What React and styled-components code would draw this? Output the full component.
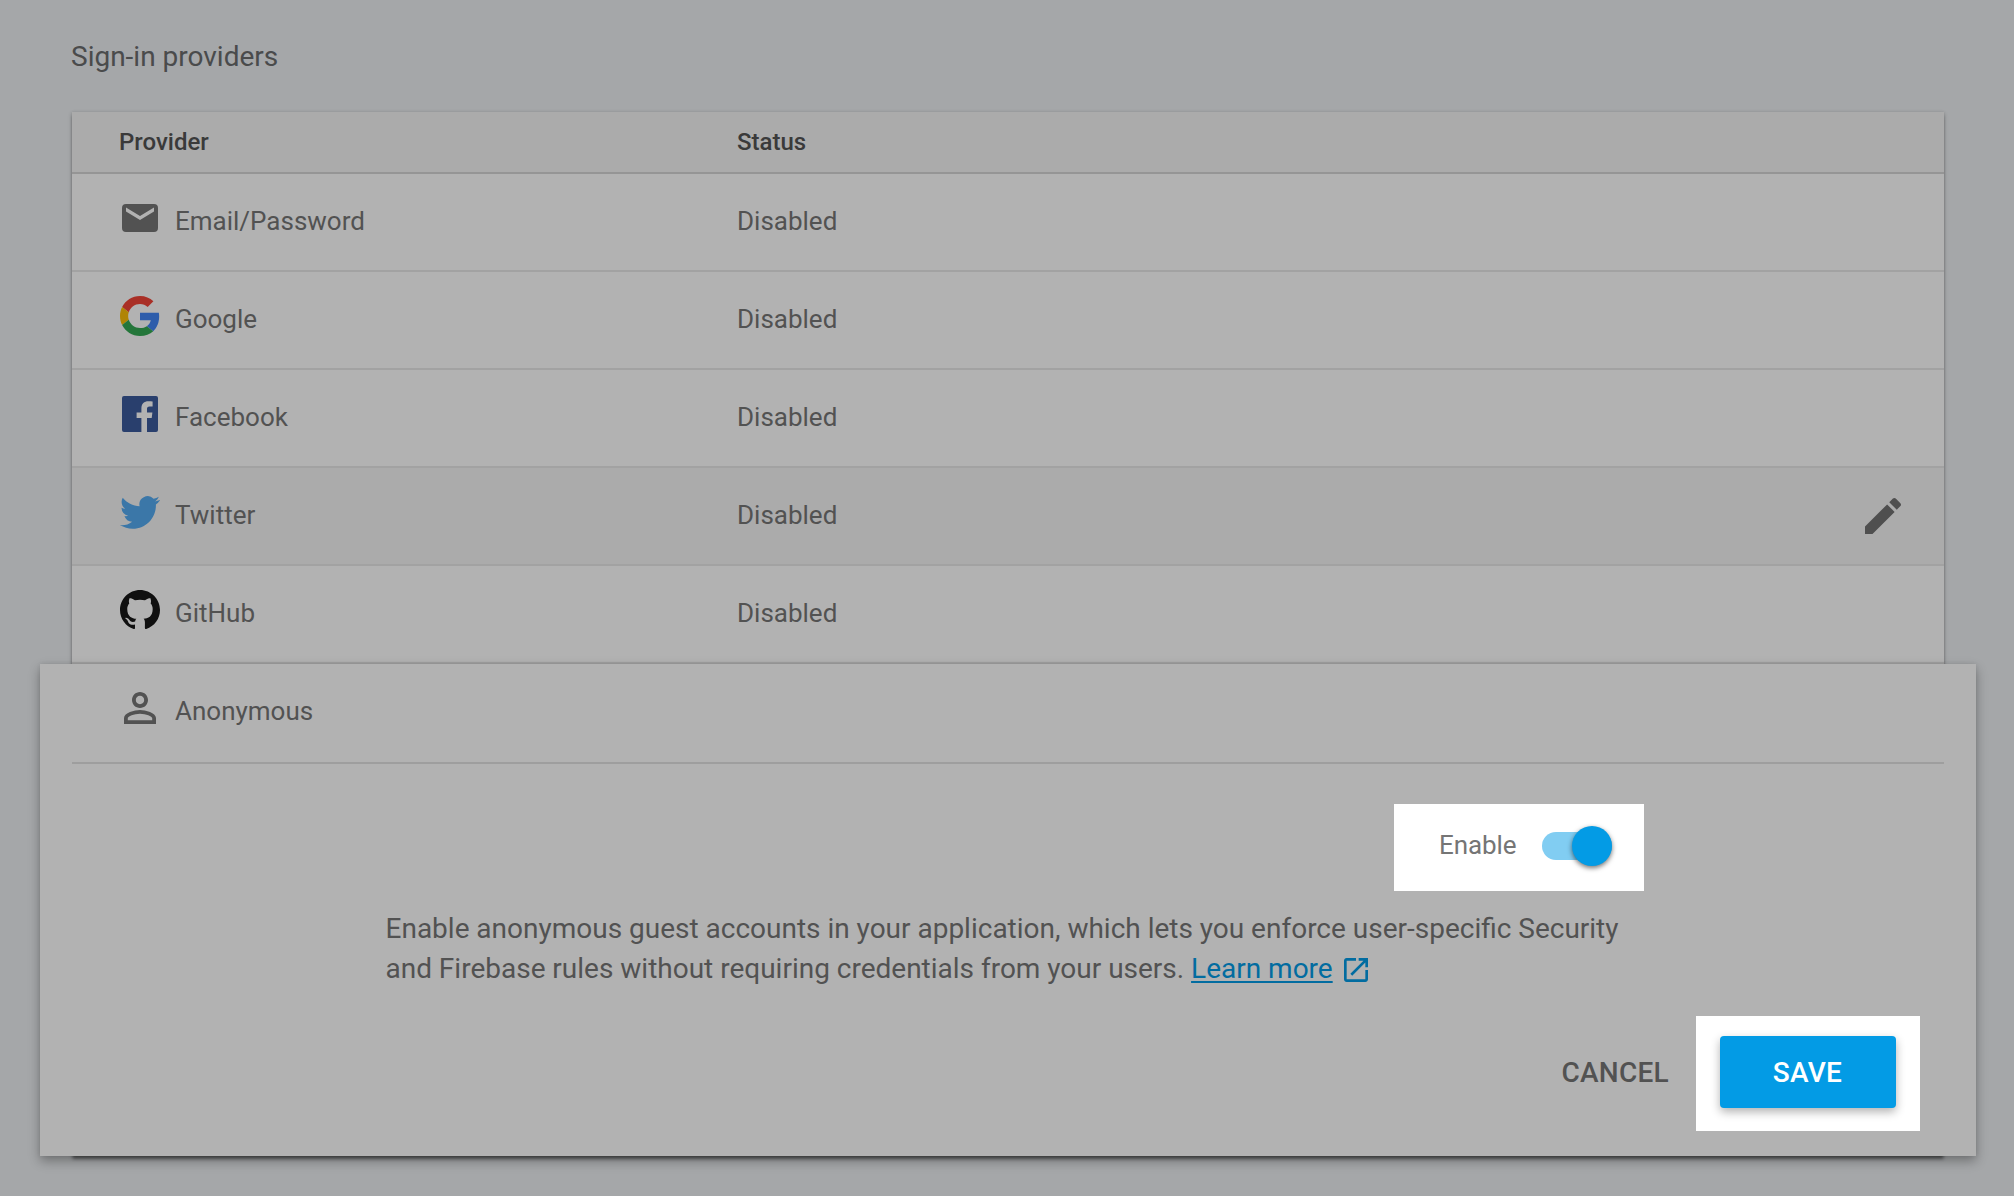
import React from "react";
import styled, { createGlobalStyle } from "styled-components";

const GlobalStyle = createGlobalStyle`
  * { box-sizing: border-box; }
  html, body { margin: 0; padding: 0; }
  body {
    background: #a5a7a9;
    font-family: Roboto, "Liberation Sans", sans-serif;
    -webkit-font-smoothing: antialiased;
  }
`;

const Page = styled.main`
  min-height: 1196px;
  padding: 37px 70px 40px 72px;
  overflow: hidden;
`;

const Title = styled.h1`
  margin: 0 0 35px -1px;
  height: 40px;
  font-size: 28px;
  line-height: 40px;
  font-weight: 400;
  color: #4a4b4c;
`;

const Card = styled.section`
  width: 1872px;
  height: 1044px;
  background: #b2b2b2;
  box-shadow:
    0 2px 4px rgba(0, 0, 0, 0.26),
    0 0 3px rgba(0, 0, 0, 0.1),
    0 4px 3px -1px rgba(0, 0, 0, 0.3);
`;

const HeaderRow = styled.div`
  display: grid;
  grid-template-columns: 618px 1fr;
  align-items: center;
  height: 62px;
  padding-left: 47px;
  background: #ababab;
  border-bottom: 2px solid #959595;
  font-size: 24px;
  font-weight: 500;
  color: #3a3a3a;
`;

const Row = styled.div`
  display: grid;
  grid-template-columns: 617px 1fr auto;
  align-items: center;
  height: 98px;
  padding: 0 37px 0 48px;
  background: ${(p) => (p.$hovered ? "#ababab" : "#b2b2b2")};
  border-bottom: 2px solid #a2a2a2;
  font-size: 26px;
  color: #525252;
`;

const Provider = styled.div`
  display: flex;
  align-items: center;
  gap: 15px;
`;

const IconSlot = styled.span`
  display: flex;
  align-items: center;
  justify-content: center;
  width: 40px;
  height: 40px;
  margin-bottom: 8px;
  svg { flex: none; display: block; }
`;

const Label = styled.span`
  line-height: 30px;
  margin-top: -2px;
`;

const EditButton = styled.button`
  display: flex;
  padding: 0;
  border: 0;
  background: none;
  color: #4f4f4f;
`;

const Panel = styled.div`
  position: relative;
  height: 492px;
  margin: 0 -32px;
  padding: 0 32px;
  background: #b2b2b2;
  box-shadow: 0 5px 11px rgba(0, 0, 0, 0.32), 0 0 4px rgba(0, 0, 0, 0.08);
`;

const PanelHead = styled.div`
  display: flex;
  height: 100px;
  padding: 0 0 2px 48px;
  border-bottom: 2px solid #9e9e9e;
  font-size: 26px;
  color: #525252;
`;

const Spotlight = styled.div`
  display: flex;
  align-items: center;
  background: #fff;
`;

const EnableBox = styled(Spotlight)`
  width: 250px;
  height: 87px;
  margin: 40px 300px 0 auto;
  padding: 0 32px 3px 45px;
  justify-content: space-between;
  font-size: 26px;
  color: #757575;
`;

const EnableLabel = styled.span`
  margin-bottom: 2px;
  letter-spacing: -0.1px;
`;

const Toggle = styled.span`
  display: flex;
  align-items: center;
  justify-content: flex-end;
  width: 70px;
  height: 28px;
  border-radius: 14px;
  background: #81cdf2;
`;

const Thumb = styled.span`
  width: 40px;
  height: 40px;
  border-radius: 50%;
  background: #039be5;
  box-shadow: 0 2px 5px rgba(0, 0, 0, 0.55);
`;

const Description = styled.p`
  margin: 18px 0 0 313.5px;
  font-size: 28px;
  line-height: 40px;
  word-spacing: -0.06px;
  color: #525252;
  white-space: nowrap;
`;

const Link = styled.a`
  color: #026ca0;
  text-decoration: underline;
  text-decoration-thickness: 2px;
  text-underline-offset: 3px;
  text-decoration-skip-ink: none;
`;

const LinkIcon = styled.svg`
  margin-left: 7px;
  vertical-align: -8px;
  fill: #026ca0;
`;

const Actions = styled.div`
  display: flex;
  align-items: flex-start;
  justify-content: flex-end;
  gap: 27px;
  height: 115px;
  margin: 27px 24px 0 0;
`;

const Button = styled.button`
  height: 72px;
  padding: 1px 0 0;
  border: 0;
  border-radius: 4px;
  font: 500 28px/71px Roboto, "Liberation Sans", sans-serif;
  letter-spacing: 0.28px;
  text-transform: uppercase;
  background: none;
  color: #525252;
`;

const CancelButton = styled(Button)`
  margin-top: 20px;
`;

const SaveButton = styled(Button)`
  width: 176px;
  padding-right: 1px;
  background: #039be5;
  color: #fff;
  box-shadow: 0 4px 10px rgba(0, 0, 0, 0.3);
`;

const SaveBox = styled(Spotlight)`
  align-items: flex-start;
  width: 224px;
  height: 115px;
  padding: 20px 24px;
`;

const MailIcon = () => (
  <svg width="36" height="28" viewBox="0 0 36 28" fill="#525252" fillRule="evenodd">
    <path d="M4 0h28a4 4 0 0 1 4 4v20a4 4 0 0 1-4 4H4a4 4 0 0 1-4-4V4a4 4 0 0 1 4-4zM4 3.6v4L18 16l14-8.400v-4L18 12z" />
  </svg>
);

const GoogleIcon = () => (
  <svg width="40" height="40" viewBox="0 0 48 48">
    <path fill="#a92f26" d="M24 9.500c3.540 0 6.710 1.220 9.210 3.600l6.850-6.850C35.900 2.380 30.470 0 24 0 14.620 0 6.510 5.380 2.560 13.220l7.980 6.190C12.430 13.720 17.740 9.500 24 9.500z" />
    <path fill="#2e5dab" d="M46.980 24.550c0-1.570-.15-3.090-.38-4.550H24v9.020h12.940c-.58 2.960-2.260 5.480-4.780 7.180l7.730 6c4.510-4.180 7.090-10.360 7.090-17.650z" />
    <path fill="#b08404" d="M10.530 28.590c-.48-1.450-.76-2.990-.76-4.590s.27-3.140.76-4.590l-7.980-6.190C.92 16.460 0 20.120 0 24c0 3.880.92 7.540 2.560 10.780l7.970-6.190z" />
    <path fill="#24763a" d="M24 48c6.480 0 11.930-2.130 15.890-5.810l-7.730-6c-2.150 1.450-4.920 2.300-8.160 2.300-6.260 0-11.570-4.220-13.470-9.910l-7.980 6.190C6.510 42.620 14.620 48 24 48z" />
  </svg>
);

const FacebookIcon = () => (
  <svg width="36" height="36" viewBox="0 0 36 36" fill="#293f6d">
    <path d="M2 0h32a2 2 0 0 1 2 2v32a2 2 0 0 1-2 2h-9V21.900h4.700l.7-5.400H25v-3.500c0-1.600.5-2.600 2.700-2.600h2.900V5.400c-.5-.1-2.200-.2-4.200-.2-4.200 0-7 2.500-7 7.200v4.100h-4.800v5.400h4.800V36H2a2 2 0 0 1-2-2V2a2 2 0 0 1 2-2z" />
  </svg>
);

const TwitterIcon = () => (
  <svg width="40" height="40" viewBox="0 -0.3 24 24" fill="#3b77a8">
    <path d="M23.953 4.570a10 10 0 01-2.825.775 4.958 4.958 0 002.163-2.723c-.951.555-2.005.959-3.127 1.184a4.920 4.920 0 00-8.384 4.482C7.690 8.095 4.067 6.130 1.640 3.162a4.822 4.822 0 00-.666 2.475c0 1.710.870 3.213 2.188 4.096a4.904 4.904 0 01-2.228-.616v.060a4.923 4.923 0 003.946 4.827 4.996 4.996 0 01-2.212.085 4.936 4.936 0 004.604 3.417 9.867 9.867 0 01-6.102 2.105c-.390 0-.779-.023-1.170-.067a13.995 13.995 0 007.557 2.209c9.053 0 13.998-7.496 13.998-13.985 0-.210 0-.420-.015-.630A9.935 9.935 0 0024 4.590z" />
  </svg>
);

const GitHubIcon = () => (
  <svg width="40" height="40" viewBox="0 0.297 24 24" fill="#101010">
    <path d="M12 .297c-6.630 0-12 5.373-12 12 0 5.303 3.438 9.800 8.205 11.385.6.113.82-.258.82-.577 0-.285-.01-1.040-.015-2.040-3.338.724-4.042-1.610-4.042-1.610C4.422 18.070 3.633 17.700 3.633 17.700c-1.087-.744.084-.729.084-.729 1.205.084 1.838 1.236 1.838 1.236 1.070 1.835 2.809 1.305 3.495.998.108-.776.417-1.305.76-1.605-2.665-.3-5.466-1.332-5.466-5.930 0-1.310.465-2.380 1.235-3.220-.135-.303-.54-1.523.105-3.176 0 0 1.005-.322 3.300 1.230.96-.267 1.980-.399 3-.405 1.020.006 2.040.138 3 .405 2.280-1.552 3.285-1.230 3.285-1.230.645 1.653.24 2.873.12 3.176.765.84 1.230 1.910 1.230 3.220 0 4.610-2.805 5.625-5.475 5.920.42.36.81 1.096.81 2.220 0 1.606-.015 2.896-.015 3.286 0 .315.21.69.825.57C20.565 22.092 24 17.592 24 12.297c0-6.627-5.373-12-12-12" />
  </svg>
);

const PersonIcon = () => (
  <svg width="48" height="48" viewBox="0 0 24 24" fill="#525252">
    <path d="M12 5.900c1.160 0 2.100.94 2.100 2.100s-.94 2.100-2.100 2.100S9.900 9.160 9.900 8s.94-2.100 2.100-2.100m0 9c2.970 0 6.100 1.460 6.100 2.100v1.100H5.900V17c0-.64 3.130-2.100 6.100-2.100M12 4C9.790 4 8 5.790 8 8s1.790 4 4 4 4-1.790 4-4-1.790-4-4-4zm0 9c-2.670 0-8 1.340-8 4v3h16v-3c0-2.660-5.330-4-8-4z" />
  </svg>
);

const PencilIcon = () => (
  <svg width="48" height="48" viewBox="0 0 24 24" fill="currentColor">
    <path d="M3 17.250V21h3.750L17.810 9.940l-3.750-3.750L3 17.250zM20.710 7.040c.39-.39.39-1.020 0-1.410l-2.340-2.340c-.39-.39-1.020-.39-1.410 0l-1.830 1.830 3.750 3.750 1.830-1.830z" />
  </svg>
);

const providers = [
  { name: "Email/Password", Icon: MailIcon },
  { name: "Google", Icon: GoogleIcon },
  { name: "Facebook", Icon: FacebookIcon },
  { name: "Twitter", Icon: TwitterIcon, hovered: true },
  { name: "GitHub", Icon: GitHubIcon },
];

export default function App() {
  return (
    <>
      <GlobalStyle />
      <Page>
        <Title>Sign-in providers</Title>
        <Card>
          <HeaderRow>
            <span>Provider</span>
            <span>Status</span>
          </HeaderRow>
          {providers.map(({ name, Icon, hovered }) => (
            <Row key={name} $hovered={hovered}>
              <Provider>
                <IconSlot><Icon /></IconSlot>
                <Label>{name}</Label>
              </Provider>
              <Label>Disabled</Label>
              {hovered && (
                <EditButton aria-label="Edit"><PencilIcon /></EditButton>
              )}
            </Row>
          ))}
          <Panel>
            <PanelHead>
              <Provider>
                <IconSlot><PersonIcon /></IconSlot>
                <Label>Anonymous</Label>
              </Provider>
            </PanelHead>
            <EnableBox>
              <EnableLabel>Enable</EnableLabel>
              <Toggle role="switch" aria-checked="true"><Thumb /></Toggle>
            </EnableBox>
            <Description>
              Enable anonymous guest accounts in your application, which lets you enforce user-specific Security
              <br />
              and Firebase rules without requiring credentials from your users. <Link>Learn more</Link>
              <LinkIcon width="32" height="32" viewBox="0 0 24 24">
                <path d="M19 19H5V5h7V3H5c-1.110 0-2 .9-2 2v14c0 1.100.89 2 2 2h14c1.100 0 2-.9 2-2v-7h-2v7zM14 3v2h3.590l-9.830 9.830 1.410 1.410L19 6.410V10h2V3h-7z" />
              </LinkIcon>
            </Description>
            <Actions>
              <CancelButton>Cancel</CancelButton>
              <SaveBox><SaveButton>Save</SaveButton></SaveBox>
            </Actions>
          </Panel>
        </Card>
      </Page>
    </>
  );
}
